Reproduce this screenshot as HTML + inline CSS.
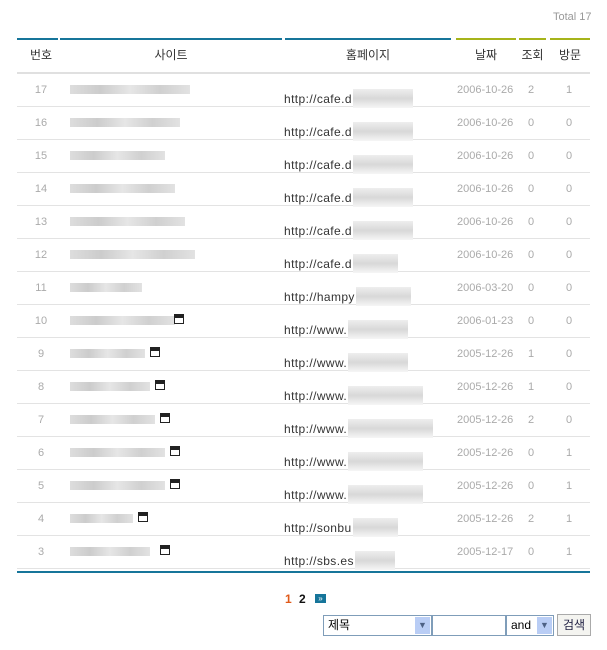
<!DOCTYPE html>
<html><head><meta charset="utf-8"><style>
body{margin:0;width:607px;height:650px;background:#fff;position:relative;overflow:hidden;font-family:"Liberation Sans","Noto Sans CJK KR",sans-serif;}
.a{position:absolute;}
.seg{position:absolute;top:38px;height:2px;}
.h{position:absolute;top:46px;font-size:12px;color:#333;text-align:center;}
.row{position:absolute;left:17px;width:573px;height:32px;border-bottom:1px solid #e3e3e3;}
.n{position:absolute;left:0;width:48px;text-align:center;top:10px;font-size:11px;color:#aaa;}
.bl{position:absolute;left:53px;top:11px;height:9px;background:linear-gradient(90deg,#ddd,#ccc,#e6e6e6,#d0d0d0,#e2e2e2);}
.u{position:absolute;left:267px;top:15px;font-size:12px;line-height:14px;color:#333;letter-spacing:0.4px;white-space:nowrap;}
.u i{display:inline-block;vertical-align:-5px;height:19px;background:linear-gradient(180deg,#eee,#d8d8d8 50%,#f6f6f6);margin-left:1px;}
.d{position:absolute;left:440px;top:10px;font-size:11px;color:#aaa;}
.c{position:absolute;left:504px;top:10px;font-size:11px;color:#aaa;width:20px;text-align:center;}
.v{position:absolute;left:542px;top:10px;font-size:11px;color:#aaa;width:20px;text-align:center;}
.fd{position:absolute;top:9px;width:10px;height:10px;border:1px solid #222;background:#fff;box-sizing:border-box;border-top-width:4px;}
</style></head><body>
<div class="a" style="left:553px;top:11px;font-size:11px;color:#999;">Total 17</div>
<div class="seg" style="left:17px;width:41px;background:#16759a"></div>
<div class="seg" style="left:60px;width:222px;background:#16759a"></div>
<div class="seg" style="left:285px;width:166px;background:#16759a"></div>
<div class="seg" style="left:456px;width:60px;background:#a6b41a"></div>
<div class="seg" style="left:519px;width:27px;background:#a6b41a"></div>
<div class="seg" style="left:550px;width:40px;background:#a6b41a"></div>
<div class="h" style="left:17px;width:48px">번호</div>
<div class="h" style="left:60px;width:222px">사이트</div>
<div class="h" style="left:285px;width:166px">홈페이지</div>
<div class="h" style="left:456px;width:60px">날짜</div>
<div class="h" style="left:519px;width:27px">조회</div>
<div class="h" style="left:550px;width:40px">방문</div>
<div class="a" style="left:17px;top:72px;width:573px;height:2px;background:#e0e0e0"></div>

<div class="row" style="top:74px"><div class="n">17</div><div class="bl" style="width:120px"></div><div class="u">http://cafe.d<i style="width:60px"></i></div><div class="d">2006-10-26</div><div class="c">2</div><div class="v">1</div></div>
<div class="row" style="top:107px"><div class="n">16</div><div class="bl" style="width:110px"></div><div class="u">http://cafe.d<i style="width:60px"></i></div><div class="d">2006-10-26</div><div class="c">0</div><div class="v">0</div></div>
<div class="row" style="top:140px"><div class="n">15</div><div class="bl" style="width:95px"></div><div class="u">http://cafe.d<i style="width:60px"></i></div><div class="d">2006-10-26</div><div class="c">0</div><div class="v">0</div></div>
<div class="row" style="top:173px"><div class="n">14</div><div class="bl" style="width:105px"></div><div class="u">http://cafe.d<i style="width:60px"></i></div><div class="d">2006-10-26</div><div class="c">0</div><div class="v">0</div></div>
<div class="row" style="top:206px"><div class="n">13</div><div class="bl" style="width:115px"></div><div class="u">http://cafe.d<i style="width:60px"></i></div><div class="d">2006-10-26</div><div class="c">0</div><div class="v">0</div></div>
<div class="row" style="top:239px"><div class="n">12</div><div class="bl" style="width:125px"></div><div class="u">http://cafe.d<i style="width:45px"></i></div><div class="d">2006-10-26</div><div class="c">0</div><div class="v">0</div></div>
<div class="row" style="top:272px"><div class="n">11</div><div class="bl" style="width:72px"></div><div class="u">http://hampy<i style="width:55px"></i></div><div class="d">2006-03-20</div><div class="c">0</div><div class="v">0</div></div>
<div class="row" style="top:305px"><div class="n">10</div><div class="bl" style="width:105px"></div><span class="fd" style="left:157px"></span><div class="u">http://www.<i style="width:60px"></i></div><div class="d">2006-01-23</div><div class="c">0</div><div class="v">0</div></div>
<div class="row" style="top:338px"><div class="n">9</div><div class="bl" style="width:75px"></div><span class="fd" style="left:133px"></span><div class="u">http://www.<i style="width:60px"></i></div><div class="d">2005-12-26</div><div class="c">1</div><div class="v">0</div></div>
<div class="row" style="top:371px"><div class="n">8</div><div class="bl" style="width:80px"></div><span class="fd" style="left:138px"></span><div class="u">http://www.<i style="width:75px"></i></div><div class="d">2005-12-26</div><div class="c">1</div><div class="v">0</div></div>
<div class="row" style="top:404px"><div class="n">7</div><div class="bl" style="width:85px"></div><span class="fd" style="left:143px"></span><div class="u">http://www.<i style="width:85px"></i></div><div class="d">2005-12-26</div><div class="c">2</div><div class="v">0</div></div>
<div class="row" style="top:437px"><div class="n">6</div><div class="bl" style="width:95px"></div><span class="fd" style="left:153px"></span><div class="u">http://www.<i style="width:75px"></i></div><div class="d">2005-12-26</div><div class="c">0</div><div class="v">1</div></div>
<div class="row" style="top:470px"><div class="n">5</div><div class="bl" style="width:95px"></div><span class="fd" style="left:153px"></span><div class="u">http://www.<i style="width:75px"></i></div><div class="d">2005-12-26</div><div class="c">0</div><div class="v">1</div></div>
<div class="row" style="top:503px"><div class="n">4</div><div class="bl" style="width:63px"></div><span class="fd" style="left:121px"></span><div class="u">http://sonbu<i style="width:45px"></i></div><div class="d">2005-12-26</div><div class="c">2</div><div class="v">1</div></div>
<div class="row" style="top:536px"><div class="n">3</div><div class="bl" style="width:80px"></div><span class="fd" style="left:143px"></span><div class="u">http://sbs.es<i style="width:40px"></i></div><div class="d">2005-12-17</div><div class="c">0</div><div class="v">1</div></div>

<div class="a" style="left:17px;top:571px;width:573px;height:2px;background:#16759a"></div>
<div class="a" style="left:285px;top:592px;font-size:12px;font-weight:bold;color:#e05a1a">1</div>
<div class="a" style="left:299px;top:592px;font-size:12px;font-weight:bold;color:#111">2</div>
<div class="a" style="left:315px;top:594px;width:11px;height:9px;background:#16759a;color:#fff;font-size:8px;line-height:9px;text-align:center">»</div>
<div class="a" style="left:323px;top:615px;width:107px;height:19px;border:1px solid #7f9db9;background:#fff;font-size:12px;line-height:19px;"><span style="margin-left:4px">제목</span><div class="a" style="right:1px;top:1px;width:15px;height:17px;background:#b9cdf5;color:#4d6185;font-size:9px;text-align:center;line-height:17px">▼</div></div>
<div class="a" style="left:432px;top:615px;width:72px;height:19px;border:1px solid #7f9db9;background:#fff"></div>
<div class="a" style="left:506px;top:615px;width:46px;height:19px;border:1px solid #7f9db9;background:#fff;font-size:12px;line-height:19px"><span style="margin-left:4px">and</span><div class="a" style="right:1px;top:1px;width:15px;height:17px;background:#b9cdf5;color:#4d6185;font-size:9px;text-align:center;line-height:17px">▼</div></div>
<div class="a" style="left:557px;top:614px;width:32px;height:20px;border:1px solid #aaa;background:#f4f4f0;font-size:12px;line-height:20px;text-align:center;color:#224">검색</div>
</body></html>
